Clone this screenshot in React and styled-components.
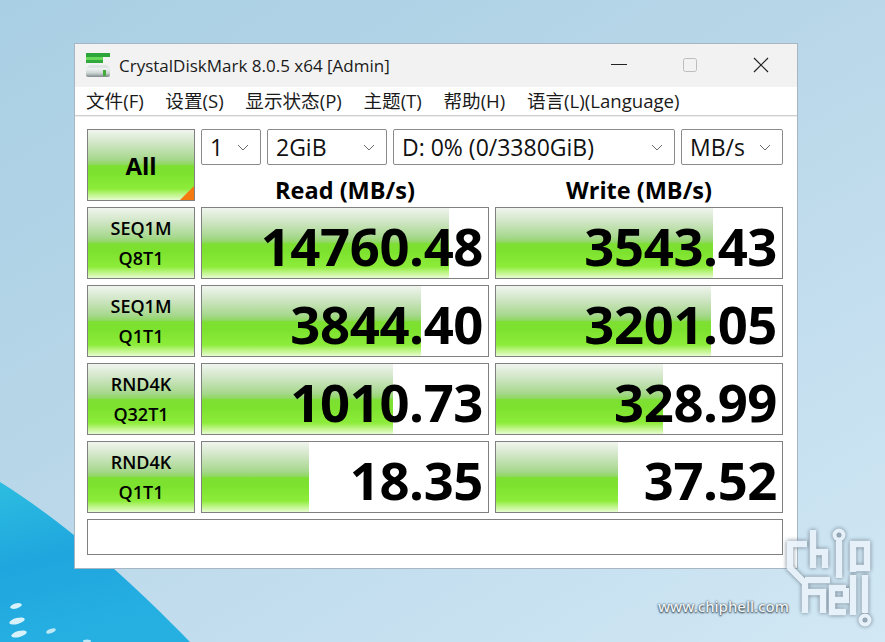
import React from "react";
import styled, { createGlobalStyle } from "styled-components";

const Global = createGlobalStyle`
  html, body { margin: 0; padding: 0; }
  body { font-family: "Open Sans", "Noto Sans CJK SC", sans-serif; }
`;

const bevel = `linear-gradient(180deg,
  #f0f5ee 0%, #cfe5c4 20%, #a6d88c 42%, #8fd862 49%,
  #7edf32 51%, #7ce22e 62%, #8dec3a 84%, #bdf585 92%, #e6fccf 100%)`;

const Desktop = styled.div`
  position: relative;
  width: 885px;
  height: 642px;
  overflow: hidden;
  padding: 43px 0 0 74px;
  box-sizing: border-box;
  background: linear-gradient(150deg, #a9cfe4 0%, #b7d6e8 40%, #c6e0f0 75%, #d2e8f4 100%);
`;

const Wallpaper = styled.svg`
  position: absolute;
  inset: 0;
`;

const Window = styled.div`
  position: relative;
  width: 722px;
  height: 524px;
  border: 1px solid #a8b6c4;
  background: #fff;
  display: flex;
  flex-direction: column;
`;

const TitleBar = styled.div`
  height: 43px;
  background: #f2f2f2;
  display: flex;
  align-items: center;
  padding: 0 1px 1px 11px;
  box-sizing: border-box;
  color: #1a1a1a;
  font-size: 17px;
`;

const Title = styled.span`
  margin-left: 9px;
  flex: 1;
`;

const WinButton = styled.div`
  width: 71px;
  height: 42px;
  display: flex;
  align-items: center;
  justify-content: center;
`;

const MenuBar = styled.div`
  height: 29px;
  display: flex;
  align-items: center;
  padding: 0 0 3px 11px;
  box-sizing: border-box;
  gap: 21.6px;
  font-size: 18.6px;
  color: #1a1a1a;
  border-bottom: 1px solid #d0d0d0;
  box-shadow: 0 1px 0 #eee;
`;

const Board = styled.div`
  display: grid;
  grid-template-columns: 108px 288px 288px;
  grid-template-rows: 36px 30px repeat(4, 72px) 36px;
  column-gap: 6px;
  row-gap: 6px;
  padding: 13px 0 0 12px;
`;

const AllButton = styled.div`
  position: relative;
  grid-row: span 2;
  box-sizing: border-box;
  border: 1px solid #808080;
  background: ${bevel};
  display: flex;
  align-items: center;
  justify-content: center;
  font-weight: 700;
  font-size: 24px;
  color: #000;
  &::after {
    content: "";
    position: absolute;
    right: 0;
    bottom: 0;
    border-style: solid;
    border-width: 0 0 14px 14px;
    border-color: transparent transparent #f47a10 transparent;
  }
`;

const Controls = styled.div`
  grid-column: 2 / 4;
  display: flex;
  gap: 6px;
`;

const Combo = styled.div`
  width: ${(p) => p.$w}px;
  height: 36px;
  box-sizing: border-box;
  border: 1px solid #8a8a8a;
  border-radius: 2px;
  display: flex;
  align-items: center;
  justify-content: space-between;
  padding: 0 11px 0 8px;
  font-size: 23px;
  color: #111;
`;

const Heading = styled.div`
  display: flex;
  align-items: flex-start;
  justify-content: center;
  font-weight: 700;
  font-size: 23.5px;
  line-height: 38px;
  height: 30px;
  color: #000;
`;

const RowLabel = styled.div`
  box-sizing: border-box;
  border: 1px solid #808080;
  background: ${bevel};
  display: flex;
  flex-direction: column;
  align-items: center;
  justify-content: center;
  gap: 5px;
  font-weight: 600;
  font-size: 18px;
  line-height: 25px;
  color: #000;
`;

const Score = styled.div`
  position: relative;
  box-sizing: border-box;
  border: 1px solid #808080;
  background: #fff;
  display: flex;
  align-items: center;
  justify-content: flex-end;
  padding: 6px 5px 0 0;
`;

const Bar = styled.div`
  position: absolute;
  left: 0;
  top: 0;
  bottom: 0;
  background: ${bevel};
`;

const Value = styled.span`
  position: relative;
  font-weight: 700;
  font-size: 52.6px;
  line-height: 64px;
  letter-spacing: -0.4px;
  color: #000;
`;

const Status = styled.div`
  grid-column: 1 / 4;
  width: 696px;
  height: 36px;
  box-sizing: border-box;
  border: 1px solid #808080;
`;

const Logo = styled.svg`
  position: absolute;
  right: 12px;
  top: 526px;
  filter: drop-shadow(0 0 2px #5f6f7c);
  opacity: 0.92;
`;

const SiteUrl = styled.span`
  position: absolute;
  left: 658px;
  top: 596px;
  font-family: "Noto Sans", sans-serif;
  font-size: 15px;
  font-weight: 500;
  line-height: 20px;
  color: #f0f5f8;
  text-shadow: 0 0 2px #2e3c48, 0 1px 2px #2e3c48;
`;

const Chevron = () => (
  <svg width="12" height="7" viewBox="0 0 12 7" fill="none" stroke="#6a6a6a" strokeWidth="1">
    <path d="M1 1l5 5 5-5" />
  </svg>
);

const DiskIcon = () => (
  <svg width="24" height="24" viewBox="0 0 24 24">
    <defs>
      <linearGradient id="dk" x1="0" y1="0" x2="0" y2="1">
        <stop offset="0" stopColor="#f2f5f5" />
        <stop offset="0.55" stopColor="#cfd6d6" />
        <stop offset="1" stopColor="#7f8a8a" />
      </linearGradient>
    </defs>
    <rect x="0" y="0" width="24" height="4" fill="#2ca53a" />
    <rect x="0" y="4" width="17" height="3" fill="#68d858" />
    <rect x="0" y="7" width="17" height="3" fill="#2fa83c" />
    <path d="M3 12h18l3 4H0z" fill="#dfe4e4" />
    <rect x="0" y="15" width="24" height="9" rx="2" fill="url(#dk)" />
    <rect x="17" y="17" width="3" height="6" fill="#45ab3c" />
  </svg>
);

const rows = [
  { a: "SEQ1M", b: "Q8T1", read: "14760.48", rw: 247, write: "3543.43", ww: 217 },
  { a: "SEQ1M", b: "Q1T1", read: "3844.40", rw: 219, write: "3201.05", ww: 215 },
  { a: "RND4K", b: "Q32T1", read: "1010.73", rw: 191, write: "328.99", ww: 167 },
  { a: "RND4K", b: "Q1T1", read: "18.35", rw: 107, write: "37.52", ww: 122 },
];

const menus = ["文件(F)", "设置(S)", "显示状态(P)", "主题(T)", "帮助(H)", "语言(L)(Language)"];

export default function App() {
  return (
    <>
      <Global />
      <Desktop>
        <Wallpaper width="885" height="642" viewBox="0 0 885 642">
          <defs>
            <linearGradient id="sw" x1="0" y1="0" x2="0.3" y2="1">
              <stop offset="0" stopColor="#2dbde0" />
              <stop offset="0.5" stopColor="#1fa6de" />
              <stop offset="1" stopColor="#26b0e2" />
            </linearGradient>
          </defs>
          <path d="M0 482 C60 520 120 570 190 642 L0 642 Z" fill="url(#sw)" />
          <ellipse cx="16" cy="606" rx="6" ry="2.5" fill="#d8f2fb" transform="rotate(-15 16 606)" />
          <ellipse cx="17" cy="621" rx="8" ry="3" fill="#d8f2fb" transform="rotate(-15 17 621)" />
          <ellipse cx="19" cy="634" rx="8" ry="3" fill="#d8f2fb" transform="rotate(-15 19 634)" />
          <ellipse cx="51" cy="631" rx="5" ry="2" fill="#bfe8f6" transform="rotate(-20 51 631)" />
          <ellipse cx="87" cy="641" rx="4" ry="1.5" fill="#bfe8f6" />
        </Wallpaper>
        <Window>
          <TitleBar>
            <DiskIcon />
            <Title>CrystalDiskMark 8.0.5 x64 [Admin]</Title>
            <WinButton>
              <svg width="16" height="2"><rect width="16" height="1" fill="#222" /></svg>
            </WinButton>
            <WinButton>
              <svg width="16" height="16"><rect x="1.5" y="1.5" width="13" height="13" rx="2" fill="none" stroke="#bdbdbd" /></svg>
            </WinButton>
            <WinButton>
              <svg width="16" height="16"><path d="M1 1l14 14M15 1L1 15" stroke="#222" strokeWidth="1.2" /></svg>
            </WinButton>
          </TitleBar>
          <MenuBar>
            {menus.map((m) => (
              <span key={m}>{m}</span>
            ))}
          </MenuBar>
          <Board>
            <AllButton>All</AllButton>
            <Controls>
              <Combo $w={60}>1<Chevron /></Combo>
              <Combo $w={120}>2GiB<Chevron /></Combo>
              <Combo $w={282}>D: 0% (0/3380GiB)<Chevron /></Combo>
              <Combo $w={102}>MB/s<Chevron /></Combo>
            </Controls>
            <Heading>Read (MB/s)</Heading>
            <Heading>Write (MB/s)</Heading>
            {rows.map((r) => (
              <React.Fragment key={r.a + r.b}>
                <RowLabel>
                  <span>{r.a}</span>
                  <span>{r.b}</span>
                </RowLabel>
                <Score>
                  <Bar style={{ width: r.rw }} />
                  <Value>{r.read}</Value>
                </Score>
                <Score>
                  <Bar style={{ width: r.ww }} />
                  <Value>{r.write}</Value>
                </Score>
              </React.Fragment>
            ))}
            <Status />
          </Board>
        </Window>
        {/* viewBox uses page coordinates */}
        <Logo width="92" height="104" viewBox="781 526 92 104">
          <g fill="none" stroke="#e9f2fa" strokeWidth="6.5">
            <path d="M807 544 H790 V568 L805 583 V613" />
            <path d="M805 580 H830" />
            <path d="M813 530 V568 M813 552 H825 V568" />
            <path d="M839 541 V578" />
            <circle cx="839" cy="535" r="4.5" strokeWidth="4" />
            <path d="M853 572 V544 H867 V568 H853" />
            <path d="M805 592 H823 V613" />
            <path d="M846 588 H832 V612 H846 M832 600 H846 V588" />
            <path d="M853 575 V615" />
            <path d="M865 575 V613" />
            <circle cx="865" cy="620" r="4.5" strokeWidth="4" />
          </g>
        </Logo>
        <SiteUrl>www.chiphell.com</SiteUrl>
      </Desktop>
    </>
  );
}
